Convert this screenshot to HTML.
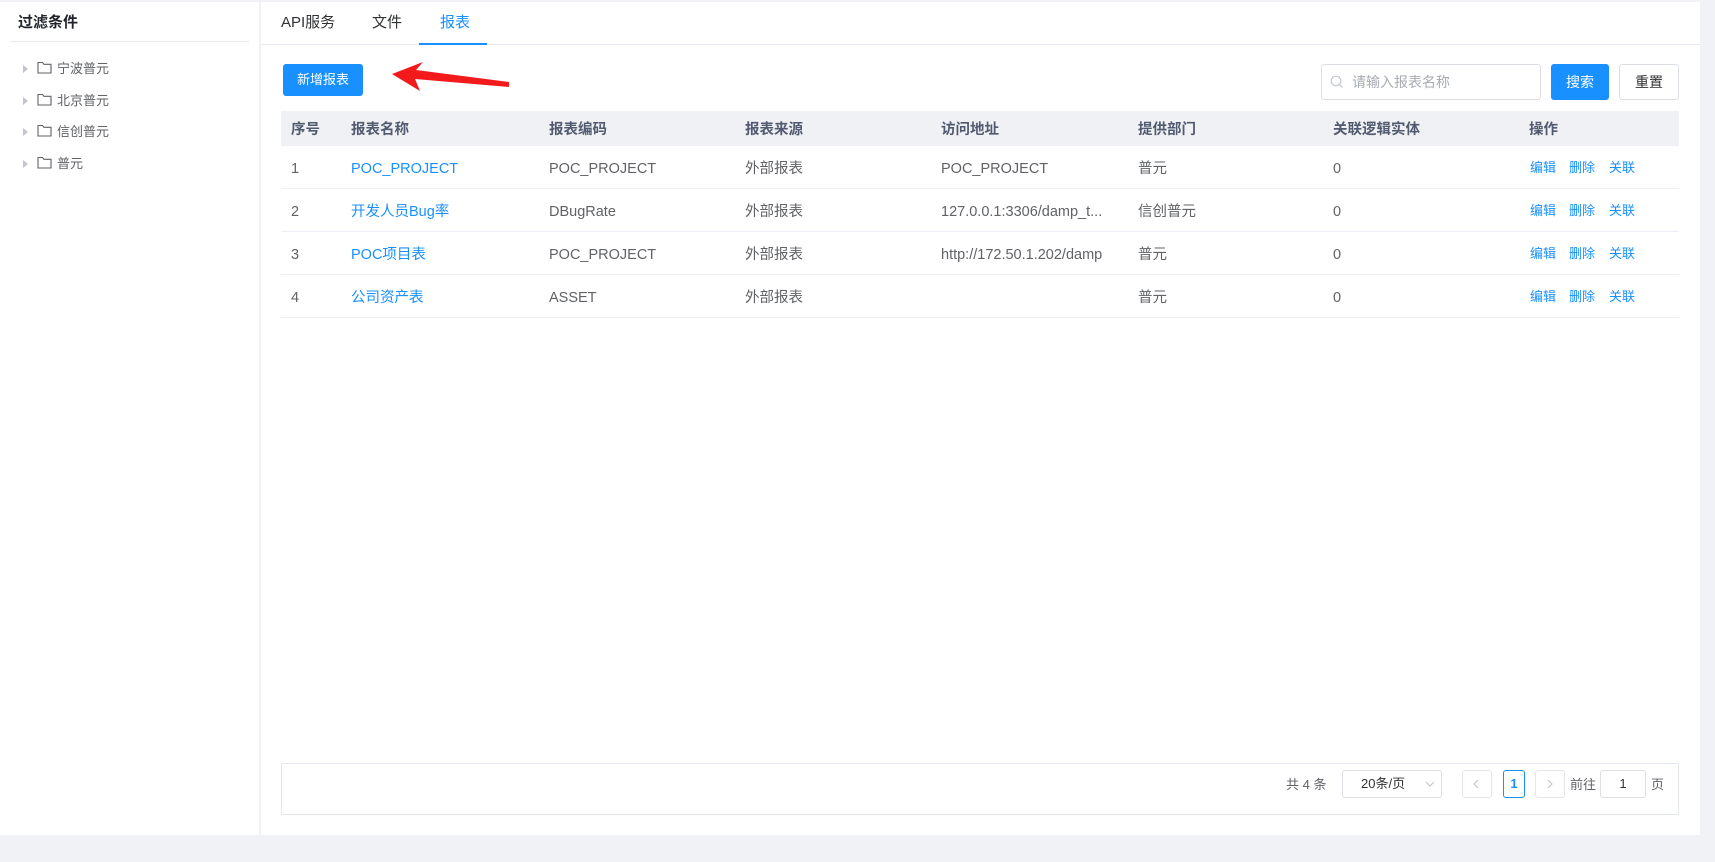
<!DOCTYPE html>
<html><head><meta charset="utf-8"><style>
*{box-sizing:border-box;margin:0;padding:0}
body{width:1715px;height:862px;background:#f0f2f5;font-family:"Liberation Sans","Noto Sans CJK SC",sans-serif;position:relative;overflow:hidden;color:#606266}
.a{position:absolute}
.left{left:0;top:2px;width:259px;height:833px;background:#fff}
.right{left:261px;top:2px;width:1439px;height:833px;background:#fff}
.t{position:absolute;white-space:nowrap;line-height:20px;height:20px}
.tree{font-size:13px;color:#606266}
.caret{width:0;height:0;border-left:5px solid #c0c4cc;border-top:4px solid transparent;border-bottom:4px solid transparent}
.th{font-size:14.5px;color:#515a6e;font-weight:bold}
.td{font-size:14.5px;color:#606266}
.lnk{color:#1890ff}
.op{font-size:13px;color:#1890ff}
.rowline{position:absolute;left:281px;width:1398px;height:1px;background:#ebeef5}
</style></head><body>
<div class="a left"></div>
<div class="a right"></div>
<div class="t" style="left:18px;top:13px;font-size:15px;font-weight:bold;color:#1f2329">过滤条件</div>
<div class="a" style="left:10px;top:41px;width:239px;height:1px;background:#e8eaef"></div>
<div class="tree">
<div class="a caret" style="left:23px;top:65px"></div>
<svg class="a" style="left:37px;top:61px" width="15" height="13" viewBox="0 0 15 13"><path d="M1 1.5h4.5l1.5 1.8h7v8.7H1z" fill="none" stroke="#606266" stroke-width="1.1"/></svg>
<div class="t" style="left:57px;top:59px">宁波普元</div>
<div class="a caret" style="left:23px;top:97px"></div>
<svg class="a" style="left:37px;top:93px" width="15" height="13" viewBox="0 0 15 13"><path d="M1 1.5h4.5l1.5 1.8h7v8.7H1z" fill="none" stroke="#606266" stroke-width="1.1"/></svg>
<div class="t" style="left:57px;top:91px">北京普元</div>
<div class="a caret" style="left:23px;top:128px"></div>
<svg class="a" style="left:37px;top:124px" width="15" height="13" viewBox="0 0 15 13"><path d="M1 1.5h4.5l1.5 1.8h7v8.7H1z" fill="none" stroke="#606266" stroke-width="1.1"/></svg>
<div class="t" style="left:57px;top:122px">信创普元</div>
<div class="a caret" style="left:23px;top:160px"></div>
<svg class="a" style="left:37px;top:156px" width="15" height="13" viewBox="0 0 15 13"><path d="M1 1.5h4.5l1.5 1.8h7v8.7H1z" fill="none" stroke="#606266" stroke-width="1.1"/></svg>
<div class="t" style="left:57px;top:154px">普元</div>
</div>
<!-- tabs -->
<div class="a" style="left:261px;top:44px;width:1439px;height:1px;background:#e4e7ed"></div>
<div class="t" style="left:281px;top:13px;font-size:15px;color:#303133">API服务</div>
<div class="t" style="left:372px;top:13px;font-size:15px;color:#303133">文件</div>
<div class="t" style="left:440px;top:13px;font-size:15px;color:#1890ff">报表</div>
<div class="a" style="left:419px;top:43px;width:68px;height:2px;background:#1890ff"></div>
<!-- button -->
<div class="a" style="left:283px;top:64px;width:80px;height:32px;background:#1890ff;border-radius:3px;color:#fff;font-size:13px;text-align:center;line-height:32px">新增报表</div>
<svg class="a" style="left:385px;top:60px" width="130" height="36" viewBox="0 0 130 36"><path d="M7 14 L38 2 L31 10 L124 22 L124 27 L30 19 L35 31 Z" fill="#f21a1a"/></svg>
<!-- search -->
<div class="a" style="left:1321px;top:64px;width:220px;height:36px;border:1px solid #dcdfe6;border-radius:3px"></div>
<svg class="a" style="left:1330px;top:75px" width="14" height="14" viewBox="0 0 14 14"><circle cx="6" cy="6" r="4.8" fill="none" stroke="#c0c4cc" stroke-width="1.1"/><path d="M9.5 9.5L12.5 12.5" stroke="#c0c4cc" stroke-width="1.1"/></svg>
<div class="t" style="left:1352px;top:72px;font-size:14px;color:#a8abb2">请输入报表名称</div>
<div class="a" style="left:1551px;top:64px;width:58px;height:36px;background:#1890ff;border-radius:3px;color:#fff;font-size:14px;text-align:center;line-height:36px">搜索</div>
<div class="a" style="left:1619px;top:64px;width:60px;height:36px;border:1px solid #dcdfe6;border-radius:3px;color:#303133;font-size:14px;text-align:center;line-height:34px">重置</div>
<!-- table -->
<div class="a" style="left:281px;top:111px;width:1398px;height:35px;background:#f0f1f5"></div>
<div class="t th" style="left:291px;top:120px">序号</div>
<div class="t th" style="left:351px;top:120px">报表名称</div>
<div class="t th" style="left:549px;top:120px">报表编码</div>
<div class="t th" style="left:745px;top:120px">报表来源</div>
<div class="t th" style="left:941px;top:120px">访问地址</div>
<div class="t th" style="left:1138px;top:120px">提供部门</div>
<div class="t th" style="left:1333px;top:120px">关联逻辑实体</div>
<div class="t th" style="left:1529px;top:120px">操作</div>

<div class="rowline" style="top:188px"></div>
<div class="rowline" style="top:231px"></div>
<div class="rowline" style="top:274px"></div>
<div class="rowline" style="top:317px"></div>

<div class="td">
<div class="t" style="left:291px;top:159px">1</div>
<div class="t lnk" style="left:351px;top:159px">POC_PROJECT</div>
<div class="t" style="left:549px;top:159px">POC_PROJECT</div>
<div class="t" style="left:745px;top:159px">外部报表</div>
<div class="t" style="left:941px;top:159px">POC_PROJECT</div>
<div class="t" style="left:1138px;top:159px">普元</div>
<div class="t" style="left:1333px;top:159px">0</div>

<div class="t" style="left:291px;top:202px">2</div>
<div class="t lnk" style="left:351px;top:202px">开发人员Bug率</div>
<div class="t" style="left:549px;top:202px">DBugRate</div>
<div class="t" style="left:745px;top:202px">外部报表</div>
<div class="t" style="left:941px;top:202px">127.0.0.1:3306/damp_t...</div>
<div class="t" style="left:1138px;top:202px">信创普元</div>
<div class="t" style="left:1333px;top:202px">0</div>

<div class="t" style="left:291px;top:245px">3</div>
<div class="t lnk" style="left:351px;top:245px">POC项目表</div>
<div class="t" style="left:549px;top:245px">POC_PROJECT</div>
<div class="t" style="left:745px;top:245px">外部报表</div>
<div class="t" style="left:941px;top:245px">http://172.50.1.202/damp</div>
<div class="t" style="left:1138px;top:245px">普元</div>
<div class="t" style="left:1333px;top:245px">0</div>

<div class="t" style="left:291px;top:288px">4</div>
<div class="t lnk" style="left:351px;top:288px">公司资产表</div>
<div class="t" style="left:549px;top:288px">ASSET</div>
<div class="t" style="left:745px;top:288px">外部报表</div>
<div class="t" style="left:1138px;top:288px">普元</div>
<div class="t" style="left:1333px;top:288px">0</div>
</div>
<div class="op">
<div class="t" style="left:1530px;top:158px">编辑</div><div class="t" style="left:1569px;top:158px">删除</div><div class="t" style="left:1609px;top:158px">关联</div>
<div class="t" style="left:1530px;top:201px">编辑</div><div class="t" style="left:1569px;top:201px">删除</div><div class="t" style="left:1609px;top:201px">关联</div>
<div class="t" style="left:1530px;top:244px">编辑</div><div class="t" style="left:1569px;top:244px">删除</div><div class="t" style="left:1609px;top:244px">关联</div>
<div class="t" style="left:1530px;top:287px">编辑</div><div class="t" style="left:1569px;top:287px">删除</div><div class="t" style="left:1609px;top:287px">关联</div>
</div>
<!-- pagination -->
<div class="a" style="left:281px;top:763px;width:1398px;height:52px;border:1px solid #e4e7ed"></div>
<div class="t" style="left:1286px;top:775px;font-size:13px;color:#606266">共 4 条</div>
<div class="a" style="left:1342px;top:770px;width:100px;height:28px;border:1px solid #dcdfe6;border-radius:3px;font-size:13px;color:#303133;line-height:26px;padding-left:18px">20条/页</div>
<svg class="a" style="left:1425px;top:781px" width="10" height="6" viewBox="0 0 10 6"><path d="M1 1l4 4 4-4" fill="none" stroke="#c0c4cc"/></svg>
<div class="a" style="left:1462px;top:770px;width:30px;height:28px;border:1px solid #e4e7ed;border-radius:3px"></div>
<svg class="a" style="left:1473px;top:779px" width="6" height="10" viewBox="0 0 6 10"><path d="M5 1L1 5l4 4" fill="none" stroke="#c0c4cc"/></svg>
<div class="a" style="left:1503px;top:770px;width:22px;height:28px;border:1px solid #1890ff;border-radius:3px;color:#1890ff;font-size:13px;font-weight:bold;text-align:center;line-height:26px">1</div>
<div class="a" style="left:1535px;top:770px;width:30px;height:28px;border:1px solid #e4e7ed;border-radius:3px"></div>
<svg class="a" style="left:1547px;top:779px" width="6" height="10" viewBox="0 0 6 10"><path d="M1 1l4 4-4 4" fill="none" stroke="#c0c4cc"/></svg>
<div class="t" style="left:1570px;top:775px;font-size:13px;color:#606266">前往</div>
<div class="a" style="left:1600px;top:770px;width:46px;height:28px;border:1px solid #dcdfe6;border-radius:3px;font-size:13px;color:#303133;text-align:center;line-height:26px">1</div>
<div class="t" style="left:1651px;top:775px;font-size:13px;color:#606266">页</div>
</body></html>
